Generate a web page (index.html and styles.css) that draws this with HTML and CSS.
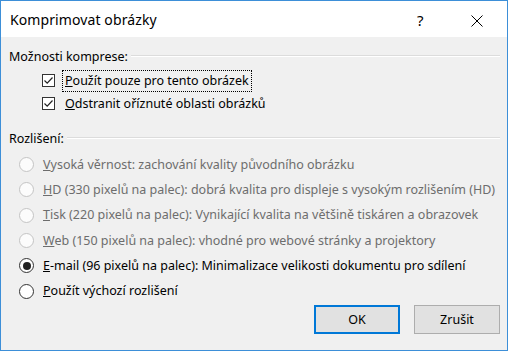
FILE: index.html
```html
<!DOCTYPE html>
<html lang="cs">
<head>
<meta charset="utf-8">
<title>Komprimovat obrázky</title>
<link rel="stylesheet" href="styles.css">
</head>
<body>
<div class="window">
  <div class="titlebar">
    <span class="title">Komprimovat obrázky</span>
    <span class="help">?</span>
    <span class="close"><svg width="12" height="12" viewBox="0 0 12 12"><path d="M0.5 0.5 L11.5 11.5 M11.5 0.5 L0.5 11.5" stroke="#000" stroke-width="1" fill="none"/></svg></span>
  </div>
  <div class="content">
    <div class="legend"><span>Možnosti komprese:</span><span class="rule"></span></div>
    <div class="checks">
      <div class="check-row">
        <span class="checkbox"><svg width="11" height="11" viewBox="0 0 11 11"><path d="M1.5 5.5 L4.2 8.2 L9.5 2.5" stroke="#222" stroke-width="1.2" fill="none"/></svg></span>
        <span class="label focus"><u>P</u>oužít pouze pro tento obrázek</span>
      </div>
      <div class="check-row">
        <span class="checkbox"><svg width="11" height="11" viewBox="0 0 11 11"><path d="M1.5 5.5 L4.2 8.2 L9.5 2.5" stroke="#222" stroke-width="1.2" fill="none"/></svg></span>
        <span class="label"><u>O</u>dstranit oříznuté oblasti obrázků</span>
      </div>
    </div>
    <div class="legend second"><span>Rozlišení:</span><span class="rule"></span></div>
    <div class="radios">
      <div class="radio-row disabled"><span class="radio"></span><span class="label"><u>V</u>ysoká věrnost: zachování kvality původního obrázku</span></div>
      <div class="radio-row disabled"><span class="radio"></span><span class="label"><u>H</u>D (330 pixelů na palec): dobrá kvalita pro displeje s vysokým rozlišením (HD)</span></div>
      <div class="radio-row disabled"><span class="radio"></span><span class="label"><u>T</u>isk (220 pixelů na palec): Vynikající kvalita na většině tiskáren a obrazovek</span></div>
      <div class="radio-row disabled"><span class="radio"></span><span class="label"><u>W</u>eb (150 pixelů na palec): vhodné pro webové stránky a projektory</span></div>
      <div class="radio-row"><span class="radio checked"></span><span class="label"><u>E</u>-mail (96 pixelů na palec): Minimalizace velikosti dokumentu pro sdílení</span></div>
      <div class="radio-row"><span class="radio"></span><span class="label"><u>P</u>oužít výchozí rozlišení</span></div>
    </div>
    <div class="buttons">
      <button class="btn default">OK</button>
      <button class="btn">Zrušit</button>
    </div>
  </div>
</div>
</body>
</html>
```

FILE: styles.css
```css
html, body {
  margin: 0;
  padding: 0;
  background: #f0f0f0;
}
body {
  font-family: "Noto Sans", "Open Sans", sans-serif;
  font-size: 12.5px;
  color: #000;
}
.window {
  box-sizing: border-box;
  width: 508px;
  height: 351px;
  border: 1px solid #3d8fd8;
  display: flex;
  flex-direction: column;
  background: #f0f0f0;
}
.titlebar {
  height: 36px;
  flex: none;
  background: #fff;
  display: flex;
  align-items: center;
  padding-left: 9px;
}
.title {
  font-size: 14px;
  letter-spacing: 0.1px;
  flex: 1;
  margin-top: 1px;
}
.help {
  font-size: 15px;
  width: 7px;
  margin-top: 1px;
}
.close {
  width: 12px;
  height: 12px;
  margin-left: 47px;
  margin-right: 24px;
  display: flex;
  margin-top: 3px;
}
.content {
  flex: 1;
  display: flex;
  flex-direction: column;
  padding: 12px 7px 16px 8px;
}
.legend {
  display: flex;
  align-items: center;
  height: 16px;
  line-height: 16px;
  gap: 3px;
}
.legend.second {
  margin-top: 16px;
}
.rule {
  flex: 1;
  height: 1px;
  background: #dcdcdc;
  border-bottom: 1px solid #fff;
  margin-top: -3px;
}
.checks {
  margin-top: 4px;
  padding-left: 33px;
}
.check-row {
  height: 23px;
  display: flex;
  align-items: center;
}
.checkbox {
  box-sizing: border-box;
  width: 13px;
  height: 13px;
  border: 1px solid #333;
  background: #fff;
  display: flex;
  align-items: center;
  justify-content: center;
  margin-right: 10px;
}
.label {
  white-space: nowrap;
  line-height: 16px;
}
.focus {
  outline: 1px dotted #000;
  outline-offset: 2px;
}
.radios {
  margin-top: 5px;
  padding-left: 10px;
}
.radio-row {
  height: 25.3px;
  display: flex;
  align-items: center;
}
.radio {
  box-sizing: border-box;
  width: 15px;
  height: 15px;
  border-radius: 50%;
  border: 1px solid #333;
  background: #fff;
  margin-right: 9px;
  flex: none;
  display: flex;
  align-items: center;
  justify-content: center;
}
.radio.checked::after {
  content: "";
  width: 8px;
  height: 8px;
  border-radius: 50%;
  background: #222;
}
.disabled .radio {
  border-color: #c4c4c4;
  background: #fcfcfc;
}
.disabled .label {
  color: #6d6d6d;
}
.buttons {
  margin-top: auto;
  display: flex;
  justify-content: flex-end;
  gap: 14px;
}
.btn {
  box-sizing: border-box;
  width: 86px;
  height: 29px;
  background: #e1e1e1;
  border: 1px solid #adadad;
  font-family: inherit;
  font-size: 12.5px;
  color: #000;
  padding: 0;
}
.btn.default {
  border: 2px solid #0078d7;
}
```
